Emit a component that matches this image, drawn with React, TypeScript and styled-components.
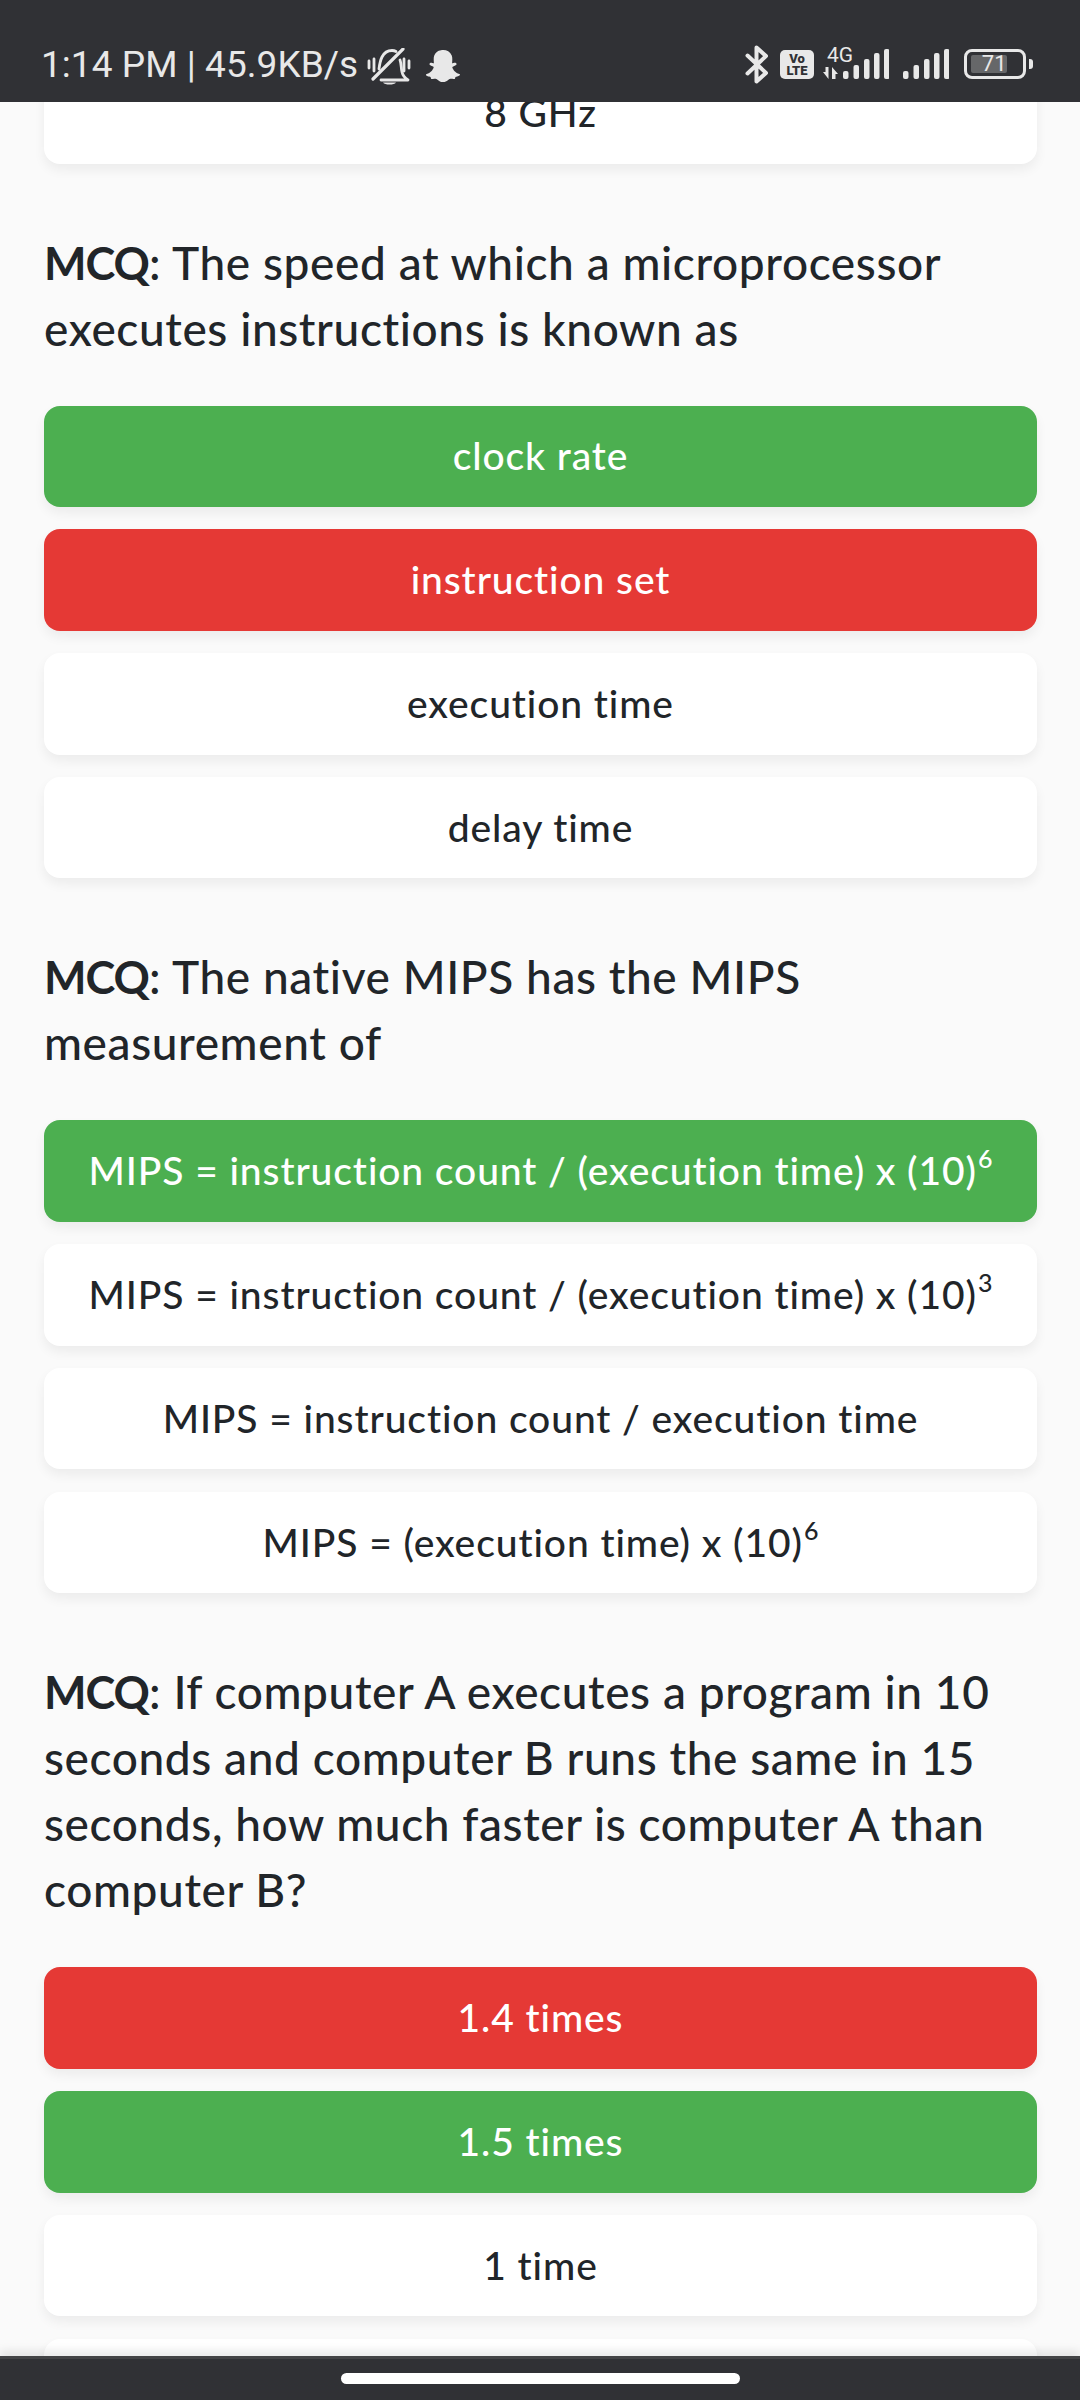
import styled, { createGlobalStyle } from "styled-components";
import { FaSnapchatGhost } from "react-icons/fa";

const GlobalStyle = createGlobalStyle`
  html, body {
    margin: 0;
    padding: 0;
    background: #fafafa;
  }
  * {
    box-sizing: border-box;
  }
`;

const Page = styled.div`
  width: 1080px;
  height: 2400px;
  display: flex;
  flex-direction: column;
  overflow: hidden;
  background: #fafafa;
  font-family: "Lato", "Noto Sans", sans-serif;
  color: #212529;
`;

const StatusBar = styled.header`
  flex: 0 0 102px;
  background: #303135;
  color: #e8e8e8;
  display: flex;
  align-items: flex-start;
  justify-content: space-between;
  padding: 47px 47px 0 41px;
  font-family: "Roboto", sans-serif;
  position: relative;
  z-index: 2;
`;

const StatusLeft = styled.div`
  display: flex;
  align-items: center;
  height: 36px;
  font-size: 37px;
  line-height: 36px;
  letter-spacing: 0.05px;
  white-space: nowrap;
`;

const BellIcon = styled.svg`
  flex: none;
  margin-left: 9px;
  margin-top: 3px;
`;

const GhostIcon = styled(FaSnapchatGhost)`
  flex: none;
  margin-left: 15px;
  margin-top: 1px;
`;

const StatusRight = styled.div`
  display: flex;
  align-items: center;
  height: 40px;
  margin-top: -3px;
`;

const Viewport = styled.main`
  flex: 1 1 auto;
  min-height: 0;
  overflow: hidden;
`;

const Scroller = styled.div`
  margin-top: -40px;
  padding: 0 43px 0 44px;
`;

const Options = styled.div`
  display: flex;
  flex-direction: column;
  gap: 22.3px;
`;

const Option = styled.div<{ $state?: "right" | "wrong" }>`
  height: 101.5px;
  padding-bottom: 2px;
  border-radius: 16px;
  display: flex;
  align-items: center;
  justify-content: center;
  font-size: 39px;
  font-weight: 500;
  letter-spacing: 0.9px;
  white-space: nowrap;
  box-shadow: 0 6px 12px rgba(0, 0, 0, 0.06);
  background: ${({ $state }) =>
    $state === "right" ? "#4caf50" : $state === "wrong" ? "#e53935" : "#ffffff"};
  color: ${({ $state }) => ($state ? "#ffffff" : "#212529")};
`;

const Power = styled.span`
  font-size: 25px;
  line-height: 0;
  vertical-align: 17px;
  margin-left: 1px;
  letter-spacing: 0;
  font-variant-position: normal;
`;

const Question = styled.p`
  margin: 66px 0 44px;
  font-size: 46px;
  line-height: 66px;
  letter-spacing: 0.6px;
  font-weight: 500;
  strong {
    font-size: 45px;
    font-weight: 700;
    letter-spacing: -1px;
  }
`;

const NavBar = styled.footer`
  flex: 0 0 44px;
  background: #303135;
  border-top: 3px solid #434446;
  display: flex;
  justify-content: center;
  padding-top: 14px;
  position: relative;
  z-index: 2;
  box-shadow: 0 -6px 8px rgba(0, 0, 0, 0.08);
`;

const HomePill = styled.div`
  width: 399px;
  height: 11px;
  border-radius: 6px;
  background: #ffffff;
`;

const BellOff = () => (
  <BellIcon width="44" height="37" viewBox="0 0 44 37" fill="none" stroke="#e8e8e8" strokeWidth="2.8" strokeLinecap="round" strokeLinejoin="round">
    <path d="M2 13v7M7 11v12M37 11v12M42 13v7" />
    <path d="M12 21c.5-4 1-8 3-12 2-4 6-6.500 10-6.500 1.500 0 3 .4 4 1" />
    <path d="M33 12c1.500 4 1 8 2 12 .6 3 3 6 6 8H14" />
    <path d="M36 1 6 31" strokeWidth="3.200" />
    <path d="M16 34.500h13c-1 1.500-3.500 2-6.500 2s-5.500-.5-6.500-2z" fill="#e8e8e8" stroke="none" />
  </BellIcon>
);

const BluetoothIcon = styled.svg`
  flex: none;
`;

const Bluetooth = () => (
  <BluetoothIcon width="24" height="39" viewBox="0 0 24 39" fill="none" stroke="#e8e8e8" strokeWidth="4" strokeLinejoin="round" strokeLinecap="round">
    <path d="M2.500 10.500 21 28 11.500 36.500V2.500L21 11 2.500 28.500" />
  </BluetoothIcon>
);

const VoLte = styled.div`
  flex: none;
  width: 34px;
  height: 29px;
  margin-left: 11px;
  border-radius: 5px;
  background: #e8e8e8;
  color: #303135;
  font-family: "Roboto", sans-serif;
  font-size: 13px;
  font-weight: 900;
  line-height: 12px;
  text-align: center;
  padding-top: 3px;
`;

const SignalSvg = styled.svg`
  flex: none;
  display: block;
`;

const signalBars = [
  { x: 0, h: 8 },
  { x: 10.5, h: 14 },
  { x: 21, h: 20 },
  { x: 31, h: 26 },
  { x: 41, h: 30 },
];

const Signal = () => (
  <SignalSvg width="46" height="30" viewBox="0 0 46 30" fill="#e8e8e8">
    {signalBars.map((bar) => (
      <rect key={bar.x} x={bar.x} y={30 - bar.h} width="5.500" height={bar.h} rx="2" />
    ))}
  </SignalSvg>
);

const NetworkGroup = styled.div`
  position: relative;
  flex: none;
  width: 66px;
  height: 30px;
  margin-left: 9px;
  display: flex;
  justify-content: flex-end;
`;

const NetworkLabel = styled.span`
  position: absolute;
  left: 4px;
  top: -4px;
  font-size: 21px;
  line-height: 21px;
  color: #e8e8e8;
`;

const Arrows = styled.svg`
  position: absolute;
  left: 0;
  bottom: 0;
`;

const SecondSignal = styled.div`
  flex: none;
  margin-left: 14px;
`;

const Battery = styled.div`
  flex: none;
  width: 62px;
  height: 30px;
  margin-left: 15px;
  border: 3px solid #e8e8e8;
  border-radius: 8px;
  padding: 3px 4px;
`;

const BatteryFill = styled.div`
  height: 100%;
  background: #666769;
  border-radius: 2px;
  color: #e8e8e8;
  font-size: 22px;
  line-height: 18px;
  text-align: right;
`;

const BatteryTip = styled.div`
  flex: none;
  width: 4px;
  height: 10px;
  margin-left: 3px;
  border-radius: 0 3px 3px 0;
  background: #e8e8e8;
`;

export default function App() {
  return (
    <Page>
      <GlobalStyle />
      <StatusBar>
        <StatusLeft>
          1:14 PM | 45.9KB/s
          <BellOff />
          <GhostIcon size={34} />
        </StatusLeft>
        <StatusRight>
          <Bluetooth />
          <VoLte>
            Vo
            <br />
            LTE
          </VoLte>
          <NetworkGroup>
            <NetworkLabel>4G</NetworkLabel>
            <Arrows width="15" height="12" viewBox="0 0 15 12" fill="#e8e8e8">
              <path d="M0 5h2.500V0h3v12zM9 0l6 7h-2.500v5h-3.500z" />
            </Arrows>
            <Signal />
          </NetworkGroup>
          <SecondSignal>
            <Signal />
          </SecondSignal>
          <Battery>
            <BatteryFill style={{ width: `${(71 / 100) * 50}px` }}>71</BatteryFill>
          </Battery>
          <BatteryTip />
        </StatusRight>
      </StatusBar>
      <Viewport>
        <Scroller>
          <Options>
            <Option>8 GHz</Option>
          </Options>

          <Question>
            <strong>MCQ</strong>: The speed at which a microprocessor executes instructions is known as
          </Question>
          <Options>
            <Option $state="right">clock rate</Option>
            <Option $state="wrong">instruction set</Option>
            <Option>execution time</Option>
            <Option>delay time</Option>
          </Options>

          <Question>
            <strong>MCQ</strong>: The native MIPS has the MIPS measurement of
          </Question>
          <Options>
            <Option $state="right">
              <span>
                MIPS = instruction count / (execution time) x (10)<Power>6</Power>
              </span>
            </Option>
            <Option>
              <span>
                MIPS = instruction count / (execution time) x (10)<Power>3</Power>
              </span>
            </Option>
            <Option>MIPS = instruction count / execution time</Option>
            <Option>
              <span>
                MIPS = (execution time) x (10)<Power>6</Power>
              </span>
            </Option>
          </Options>

          <Question>
            <strong>MCQ</strong>: If computer A executes a program in 10 seconds and computer B runs the same in 15 seconds, how much faster is computer A than computer B?
          </Question>
          <Options>
            <Option $state="wrong">1.4 times</Option>
            <Option $state="right">1.5 times</Option>
            <Option>1 time</Option>
            <Option />
          </Options>
        </Scroller>
      </Viewport>
      <NavBar>
        <HomePill />
      </NavBar>
    </Page>
  );
}
